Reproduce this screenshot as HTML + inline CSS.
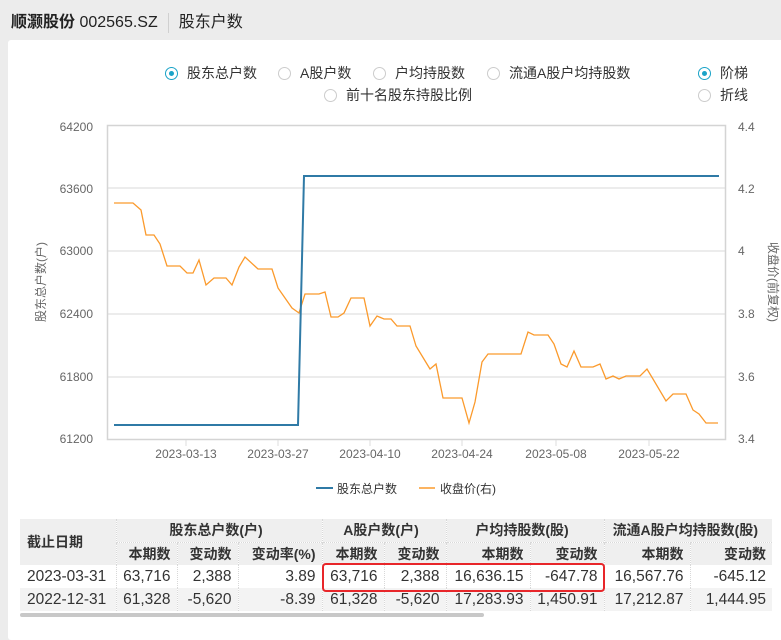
<!DOCTYPE html>
<html><head><meta charset="utf-8"><style>
*{margin:0;padding:0;box-sizing:border-box}
body{width:781px;height:617px;background:#ececec;font-family:"Liberation Sans","Noto Sans CJK SC",sans-serif;position:relative;overflow:hidden;color:#333}
.hdr{position:absolute;left:11px;top:8px;font-size:16px;color:#222;white-space:nowrap}
.hdr b{font-weight:bold}
.hdr .sep{display:inline-block;width:1px;height:20px;background:#d0d0d0;vertical-align:middle;margin:0 10px}
.panel{position:absolute;left:8px;top:40px;width:790px;height:600px;background:#fff;border-radius:3px}
.r{position:absolute;font-size:14px;color:#333;white-space:nowrap;line-height:16px}
.r i{display:inline-block;width:13px;height:13px;border:1px solid #ccc;border-radius:50%;vertical-align:-2px;margin-right:9px;position:relative}
.r i.on{border-color:#1aa3c8}
.r i.on:after{content:"";position:absolute;left:3px;top:3px;width:5px;height:5px;border-radius:50%;background:#1aa3c8}
table{position:absolute;left:20px;top:519px;border-collapse:collapse;font-size:14px;width:752px;table-layout:fixed}
td{height:23px;line-height:22px;padding:0 6px 0 0;text-align:right;white-space:nowrap;overflow:hidden;border-left:1px dotted #d8d8d8}
tbody td{font-size:15.5px}
thead td{background:#efefef;font-weight:bold;text-align:center;color:#333}
thead tr:nth-child(2) td{text-align:right;border-top:1px dotted #d8d8d8}
tbody tr:nth-child(2) td{background:#f3f3f3}
td.d{text-align:left;border-left:none;padding-left:7px}
</style></head><body>
<div class="hdr"><b>顺灏股份</b> 002565.SZ<span class="sep"></span>股东户数</div>
<div class="panel"></div>
<div class="r" style="left:165px;top:65px"><i class="on"></i>股东总户数</div>
<div class="r" style="left:278px;top:65px"><i></i>A股户数</div>
<div class="r" style="left:373px;top:65px"><i></i>户均持股数</div>
<div class="r" style="left:487px;top:65px"><i></i>流通A股户均持股数</div>
<div class="r" style="left:324px;top:87px"><i></i>前十名股东持股比例</div>
<div class="r" style="left:698px;top:65px"><i class="on"></i>阶梯</div>
<div class="r" style="left:698px;top:87px"><i></i>折线</div>
<svg style="position:absolute;left:0;top:0" width="781" height="617" font-family="Liberation Sans, Noto Sans CJK SC, sans-serif">
<g stroke="#e6e6e6" stroke-width="1.5">
<line x1="107" y1="188" x2="725" y2="188"/><line x1="107" y1="251" x2="725" y2="251"/>
<line x1="107" y1="314" x2="725" y2="314"/><line x1="107" y1="377" x2="725" y2="377"/>
</g>
<rect x="107.5" y="125.5" width="618" height="314" fill="none" stroke="#d4d4d4" stroke-width="1.5"/>
<g stroke="#ddd"><line x1="186" y1="440" x2="186" y2="446"/><line x1="278" y1="440" x2="278" y2="446"/><line x1="370" y1="440" x2="370" y2="446"/><line x1="462" y1="440" x2="462" y2="446"/><line x1="556" y1="440" x2="556" y2="446"/><line x1="649" y1="440" x2="649" y2="446"/></g>
<g font-size="12" fill="#666" text-anchor="end">
<text x="93" y="131">64200</text><text x="93" y="193">63600</text><text x="93" y="255">63000</text><text x="93" y="318">62400</text><text x="93" y="381">61800</text><text x="93" y="443">61200</text>
</g>
<g font-size="12" fill="#666">
<text x="738" y="131">4.4</text><text x="738" y="193">4.2</text><text x="738" y="255">4</text><text x="738" y="318">3.8</text><text x="738" y="381">3.6</text><text x="738" y="443">3.4</text>
</g>
<g font-size="12" fill="#666" text-anchor="middle">
<text x="186" y="458">2023-03-13</text><text x="278" y="458">2023-03-27</text><text x="370" y="458">2023-04-10</text><text x="462" y="458">2023-04-24</text><text x="556" y="458">2023-05-08</text><text x="649" y="458">2023-05-22</text>
</g>
<text transform="translate(45,282) rotate(-90)" font-size="12" fill="#666" text-anchor="middle">股东总户数(户)</text>
<text transform="translate(769,282) rotate(90)" font-size="12" fill="#666" text-anchor="middle">收盘价(前复权)</text>
<polyline fill="none" stroke="#fb9a2c" stroke-width="1.3" points="114,203 133,203 141,210 146,235 154,235 160,244 167,266 180,266 187,273 193,273 199,260 206,285 214,278 226,278 232,285 239,267 245,257 258,269 272,269 278,288 292,308 299,313 305,294 319,294 325,292 331,317 338,317 344,313 351,298 364,298 370,326 377,316 384,319 391,319 397,326 410,326 416,346 430,369 436,364 443,398 462,398 469,423 475,402 482,362 488,354 521,354 528,332 534,335 548,335 554,344 561,364 567,367 574,351 581,367 593,367 600,364 606,379 613,376 619,379 626,376 640,376 647,369 653,379 666,401 673,394 686,394 693,410 699,414 706,423 718,423"/>
<polyline fill="none" stroke="#2f7aa6" stroke-width="2" points="114,425 298,425 304,176 719,176"/>
<line x1="316" y1="488" x2="333" y2="488" stroke="#2f7aa6" stroke-width="2"/>
<text x="337" y="493" font-size="12" fill="#333">股东总户数</text>
<line x1="419" y1="488" x2="435" y2="488" stroke="#fb9a2c" stroke-width="1.5"/>
<text x="440" y="493" font-size="12" fill="#333">收盘价(右)</text>
</svg>
<table>
<colgroup><col style="width:96px"><col style="width:61px"><col style="width:61px"><col style="width:84px"><col style="width:62px"><col style="width:62px"><col style="width:84px"><col style="width:74px"><col style="width:86px"><col style="width:82px"></colgroup>
<thead>
<tr><td class="d" rowspan="2" style="vertical-align:middle">截止日期</td><td colspan="3">股东总户数(户)</td><td colspan="2">A股户数(户)</td><td colspan="2">户均持股数(股)</td><td colspan="2">流通A股户均持股数(股)</td></tr>
<tr><td>本期数</td><td>变动数</td><td>变动率(%)</td><td>本期数</td><td>变动数</td><td>本期数</td><td>变动数</td><td>本期数</td><td>变动数</td></tr>
</thead>
<tbody>
<tr><td class="d">2023-03-31</td><td>63,716</td><td>2,388</td><td>3.89</td><td>63,716</td><td>2,388</td><td>16,636.15</td><td>-647.78</td><td>16,567.76</td><td>-645.12</td></tr>
<tr><td class="d">2022-12-31</td><td>61,328</td><td>-5,620</td><td>-8.39</td><td>61,328</td><td>-5,620</td><td>17,283.93</td><td>1,450.91</td><td>17,212.87</td><td>1,444.95</td></tr>
</tbody>
</table>
<div style="position:absolute;left:322px;top:563px;width:283px;height:29px;border:2px solid #e8262a;border-radius:4px"></div>
<div style="position:absolute;left:20px;top:613px;width:464px;height:4px;background:#c8c8c8;border-radius:2px"></div>
</body></html>
